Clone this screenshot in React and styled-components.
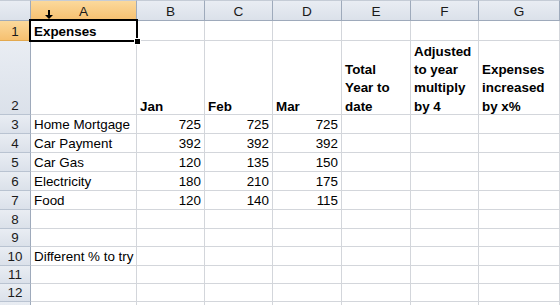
import React from "react";
import styled, { createGlobalStyle, css } from "styled-components";

const Global = createGlobalStyle`
  html, body { margin: 0; padding: 0; background: #fff; overflow: hidden; }
  body { font-family: Arial, "Liberation Sans", sans-serif; }
`;

const COLS = [31, 106, 68, 68, 69, 69, 68];
const ROW_H = [21, 20, 74, 19, 19, 19, 19, 19, 19, 18, 19, 18, 18, 20];
const GRID = "#d3d6db";
const HEAD_LINE = "#9eaabb";

const Sheet = styled.div`
  display: grid;
  grid-template-columns: ${COLS.map((c) => c + "px").join(" ")} 1fr;
  grid-template-rows: ${ROW_H.map((r) => r + "px").join(" ")};
  width: 560px;
  height: 305px;
  overflow: hidden;
  font-family: Arial, "Liberation Sans", sans-serif;
  font-size: 13.4px;
  color: #000;
`;

const headBg = css`
  background: ${(p) =>
    p.$active
      ? "linear-gradient(#fbd99c, #f6c070)"
      : "linear-gradient(#e9edf3, #dbe1ea)"};
`;

const Corner = styled.div`
  ${headBg};
  border-right: 1px solid ${HEAD_LINE};
  border-bottom: 1px solid ${HEAD_LINE};
  border-top: 1px solid #c5ccd6;
  box-sizing: border-box;
`;

const ColHead = styled.div`
  ${headBg};
  position: relative;
  box-sizing: border-box;
  border-right: 1px solid ${HEAD_LINE};
  border-bottom: 1px solid ${HEAD_LINE};
  border-top: 1px solid #c5ccd6;
  display: flex;
  align-items: center;
  justify-content: center;
  padding-top: 1px;
  font-size: 13.6px;
  color: #1a1a1a;
`;

const RowHead = styled.div`
  ${headBg};
  box-sizing: border-box;
  border-right: 1px solid ${HEAD_LINE};
  border-bottom: 1px solid ${(p) => (p.$active ? "#e3a94f" : "#b9c3d1")};
  display: flex;
  align-items: flex-end;
  justify-content: center;
  line-height: 16px;
  font-size: 13.4px;
  color: #1a1a1a;
`;

const Cell = styled.div`
  position: relative;
  box-sizing: border-box;
  border-right: 1px solid ${GRID};
  border-bottom: 1px solid ${GRID};
  display: flex;
  flex-direction: column;
  justify-content: flex-end;
  align-items: ${(p) => (p.$num ? "flex-end" : "flex-start")};
  padding: 0 3px 0 3px;
  line-height: 16px;
  font-weight: ${(p) => (p.$bold ? 700 : 400)};
  white-space: nowrap;
  overflow: visible;
  z-index: ${(p) => (p.$selected ? 2 : 1)};
`;

const WrapLine = styled.span`
  line-height: 18.3px;
  &:last-child {
    margin-bottom: -2px;
  }
`;

const Selection = styled.div`
  position: absolute;
  inset: -2px;
  border: 2px solid #000;
  pointer-events: none;
`;

const FillHandle = styled.div`
  position: absolute;
  right: -5px;
  bottom: -5px;
  width: 5px;
  height: 5px;
  background: #000;
  border: 1px solid #fff;
`;

const Cursor = styled.svg`
  position: absolute;
  left: 14px;
  top: 9px;
`;

const letters = ["A", "B", "C", "D", "E", "F", "G"];

const data = [
  [{ t: "Expenses", b: true, sel: true }],
  [
    null,
    { t: ["Jan"], b: true },
    { t: ["Feb"], b: true },
    { t: ["Mar"], b: true },
    { t: ["Total", "Year to", "date"], b: true },
    { t: ["Adjusted", "to year", "multiply", "by 4"], b: true },
    { t: ["Expenses", "increased", "by x%"], b: true },
  ],
  [{ t: "Home Mortgage" }, 725, 725, 725],
  [{ t: "Car Payment" }, 392, 392, 392],
  [{ t: "Car Gas" }, 120, 135, 150],
  [{ t: "Electricity" }, 180, 210, 175],
  [{ t: "Food" }, 120, 140, 115],
  [],
  [],
  [{ t: "Different % to try" }],
  [],
  [],
  [],
];

function renderCell(v, r, c) {
  const key = `${r}-${c}`;
  if (v == null) return <Cell key={key} />;
  if (typeof v === "number")
    return (
      <Cell key={key} $num>
        {v}
      </Cell>
    );
  if (Array.isArray(v.t))
    return (
      <Cell key={key} $bold={v.b}>
        {v.t.map((l, i) => (
          <WrapLine key={i}>{l}</WrapLine>
        ))}
      </Cell>
    );
  return (
    <Cell key={key} $bold={v.b} $selected={v.sel}>
      {v.t}
      {v.sel && (
        <Selection>
          <FillHandle />
        </Selection>
      )}
    </Cell>
  );
}

export default function App() {
  return (
    <>
      <Global />
      <Sheet>
        <Corner />
        {letters.map((l, i) => (
          <ColHead key={l} $active={i === 0}>
            {i === 0 && (
              <Cursor width="8" height="9" viewBox="0 0 8 9">
                <path d="M3 0h2v5h3L4 9 0 5h3z" fill="#000" />
              </Cursor>
            )}
            {l}
          </ColHead>
        ))}
        {data.map((row, r) => (
          <React.Fragment key={r}>
            <RowHead $active={r === 0}>{r < 12 ? r + 1 : ""}</RowHead>
            {Array.from({ length: 7 }).map((_, c) => renderCell(row[c], r, c))}
          </React.Fragment>
        ))}
      </Sheet>
    </>
  );
}
